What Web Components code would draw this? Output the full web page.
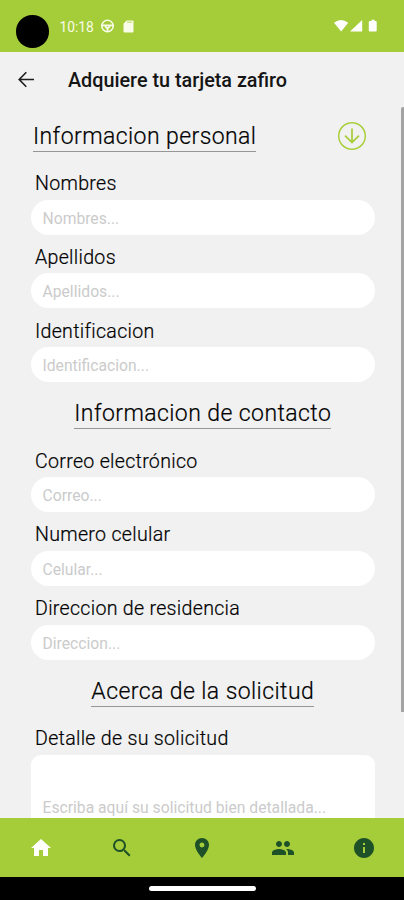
<!DOCTYPE html>
<html lang="es"><head><meta charset="utf-8"><title>Adquiere tu tarjeta zafiro</title>
<style>html,body{margin:0;height:100%;overflow:hidden;background:#f1f1f1}body{font-family:Roboto,sans-serif;color:#000}</style></head>
<body>
<zafiro-screen>
  <status-bar slot="top"></status-bar>
  <title-bar slot="top">Adquiere tu tarjeta zafiro</title-bar>
  <form-section><span slot="title">Informacion personal</span><down-badge slot="action"></down-badge>
    <text-field label="Nombres" hint="Nombres..."></text-field>
    <text-field label="Apellidos" hint="Apellidos..."></text-field>
    <text-field label="Identificacion" hint="Identificacion..."></text-field>
  </form-section>
  <form-section centered><span slot="title">Informacion de contacto</span>
    <text-field label="Correo electrónico" hint="Correo..."></text-field>
    <text-field label="Numero celular" hint="Celular..."></text-field>
    <text-field label="Direccion de residencia" hint="Direccion..."></text-field>
  </form-section>
  <form-section centered><span slot="title">Acerca de la solicitud</span>
    <text-field area label="Detalle de su solicitud" hint="Escriba aquí su solicitud bien detallada..."></text-field>
  </form-section>
  <tab-bar slot="bottom"></tab-bar>
  <gesture-bar slot="bottom"></gesture-bar>
</zafiro-screen>
<script>
const define=(name,html)=>customElements.define(name,class extends HTMLElement{
  constructor(){super();this.attachShadow({mode:'open'}).innerHTML=typeof html==='function'?html(this):html}
});
define('zafiro-screen',`<style>
:host{display:flex;flex-direction:column;height:900px;width:404px;background:#f1f1f1}
main{flex:1;min-height:0;overflow:hidden;display:grid;grid-template-columns:1fr 4px}
.form{padding:0 25.5px 0 31px;min-width:0;height:0}
.thumb{height:605px;background:#a3a3a3;margin-left:.5px;border-radius:2px 0 0 0}
</style><slot name="top"></slot><main><div class="form"><slot></slot></div><div class="thumb"></div></main><slot name="bottom"></slot>`);
define('status-bar',`<style>
:host{display:flex;flex:none;align-items:center;height:51.5px;background:#a4cd39;color:#f8fce9;box-sizing:border-box;padding:0 26px 0 16px}
.cam{width:32.5px;height:32.5px;border-radius:50%;background:#000;margin-top:11px}
.time{font:400 13.8px/16px Roboto,sans-serif;margin:2px 0 0 11px;width:34px;white-space:nowrap}
svg{display:block;margin-top:1px}.sp{flex:1}
</style><div class="cam"></div><div class="time">10:18</div>
<svg style="margin-left:6px" width="15" height="14" viewBox="0 0 15 14" fill="none" stroke="#f8fce9"><circle cx="7.5" cy="7" r="5.7" stroke-width="1.6"/><path d="M2 6.4h11M5 6.800l1.5 2h2l1.5-2M7.5 8v5" stroke-width="1.7"/></svg>
<svg style="margin-left:8px" width="11" height="13" viewBox="0 0 11 13"><path fill="#f8fce9" fill-rule="evenodd" d="M3.6.5H9.5q1 0 1 1v10q0 1-1 1h-8q-1 0-1-1V3.8zM4 1.700v.8h5v-.8z"/></svg>
<div class="sp"></div>
<svg width="45" height="14" viewBox="0 0 45 14" fill="#fff"><path d="M1 3.700Q8 -1.800 15.2 3.700L8.200 12.500zM17 12.600 29.200 1v11.600zM36.800 2h1.700V.7h3.100V2h1.100q1 0 1 1v8.600q0 1-1 1h-5.900q-1 0-1-1V3q0-1 1-1z"/></svg>`);
define('title-bar',`<style>
:host{display:flex;flex:none;align-items:center;height:55.5px;font:500 19.8px/24px Roboto,sans-serif;padding-left:18px;white-space:nowrap;color:#151515}
svg{margin-right:33px}
.t{padding-top:3px}
</style><svg width="17" height="17" viewBox="0 0 17 17" fill="none" stroke="#1c1c1c" stroke-width="1.6"><path d="M16 8.500H1.500M8.300 1.200 1.200 8.500l7.100 7.300"/></svg><div class="t"><slot></slot></div>`);
define('down-badge',`<style>:host{display:block;margin-top:-1px}svg{display:block}</style><svg width="30" height="30" viewBox="0 0 30 30" fill="none" stroke="#a9cf3f"><circle cx="15" cy="15" r="13.3" stroke-width="1.5"/><path stroke-width="1.8" d="M15 7.500v13.800M8 14.600l7 6.900 7-6.900"/></svg>`);
define('form-section',`<style>
:host{display:block}
header{display:flex;align-items:center;height:58px;box-sizing:border-box;padding:0 8px 0 2px;justify-content:space-between}
:host([centered]) header{justify-content:center;padding:0;height:56.3px}
.t{font:300 23px/27px Roboto,sans-serif;letter-spacing:.42px;white-space:nowrap;border-bottom:1px solid #969696;padding-bottom:1px;margin-top:2px;color:#000;-webkit-text-stroke:.2px #000}
:host([centered]) .t{margin-top:1px}
</style><header><div class="t"><slot name="title"></slot></div><slot name="action"></slot></header><slot></slot>`);
define('text-field',el=>`<style>
:host{display:flex;flex-direction:column;height:73.75px}
:host([area]){height:auto}
label{flex:none;font:300 19.6px/24px Roboto,sans-serif;letter-spacing:.29px;-webkit-text-stroke:.2px #000;padding-left:4px;height:34.5px;display:flex;align-items:flex-end;padding-bottom:3.5px;box-sizing:border-box;white-space:nowrap;color:#000}
.box{height:35px;border-radius:18px;background:#fff;display:flex;align-items:center;padding:2px 11.5px 0;box-sizing:border-box;font:400 15.7px/19px Roboto,sans-serif;color:#cbcbcb;white-space:nowrap}
:host([area]) .box{height:103px;flex:none;border-radius:10px}
</style><label>${el.getAttribute('label')}</label><div class="box">${el.getAttribute('hint')}</div>`);
define('tab-bar',`<style>
:host{display:grid;flex:none;grid-template-columns:repeat(5,1fr);place-items:center;height:59px;padding-left:1px;box-sizing:border-box;background:#a4cd39;z-index:1}
svg{display:block;fill:#1e5128}.on{fill:#fff}
</style>
<svg class="on" width="24" height="24" viewBox="0 0 24 24"><path d="M10 20v-6h4v6h5v-8h3L12 3 2 12h3v8z"/></svg>
<svg width="24" height="24" viewBox="0 0 24 24"><path d="M15.500 14h-.79l-.28-.27A6.47 6.47 0 0 0 16 9.500 6.500 6.500 0 1 0 9.500 16c1.610 0 3.090-.59 4.230-1.570l.27.28v.79l5 4.990L20.490 19zm-6 0C7.010 14 5 11.990 5 9.500S7.010 5 9.500 5 14 7.010 14 9.500 11.990 14 9.500 14z"/></svg>
<svg width="24" height="24" viewBox="0 0 24 24"><path d="M12 2C8.130 2 5 5.130 5 9c0 5.250 7 13 7 13s7-7.750 7-13c0-3.870-3.130-7-7-7zm0 9.500a2.500 2.500 0 0 1 0-5 2.500 2.500 0 0 1 0 5z"/></svg>
<svg width="24" height="24" viewBox="0 0 24 24"><path d="M16 11c1.660 0 2.990-1.340 2.990-3S17.660 5 16 5s-3 1.340-3 3 1.340 3 3 3zm-8 0c1.660 0 2.990-1.340 2.990-3S9.660 5 8 5 5 6.340 5 8s1.340 3 3 3zm0 2c-2.330 0-7 1.170-7 3.500V19h14v-2.500c0-2.330-4.670-3.500-7-3.500zm8 0c-.29 0-.62.02-.97.05 1.160.84 1.970 1.970 1.970 3.450V19h6v-2.500c0-2.330-4.670-3.500-7-3.500z"/></svg>
<svg width="24" height="24" viewBox="0 0 24 24"><path d="M12 2C6.480 2 2 6.480 2 12s4.480 10 10 10 10-4.480 10-10S17.520 2 12 2zm1 15h-2v-6h2zm0-8h-2V7h2z"/></svg>`);
define('gesture-bar',`<style>:host{display:flex;flex:none;height:23px;background:#000;justify-content:center;align-items:center}
div{width:107px;height:5px;border-radius:3px;background:#fff}</style><div></div>`);
</script></body></html>
